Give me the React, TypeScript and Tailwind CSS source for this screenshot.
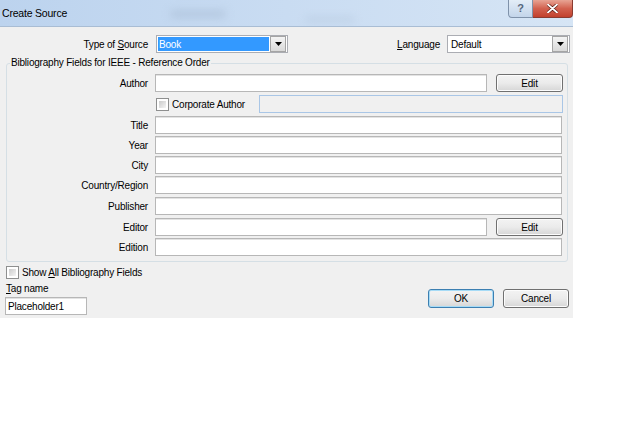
import React from 'react';

const FONT = "font-['Liberation_Sans',Arial,sans-serif]";

function DropArrow() {
  return (
    <div className="w-[16px] h-[16px] border border-[#a5a5a5] bg-gradient-to-b from-[#f4f4f4] to-[#d9d9d9] flex items-center justify-center">
      <svg width="7" height="4" viewBox="0 0 7 4">
        <path d="M0 0 H7 L3.5 4 Z" fill="#000" />
      </svg>
    </div>
  );
}

function TextBox({ className = '', children }: { className?: string; children?: React.ReactNode }) {
  return (
    <div
      className={`h-[18px] border border-[#b7b7b7] bg-white shadow-[inset_0_1px_0_#e3e3e3] flex items-center px-[2px] text-[10px] text-black ${className}`}
    >
      {children}
    </div>
  );
}

function Button({ label, primary = false, className = '' }: { label: string; primary?: boolean; className?: string }) {
  return (
    <div
      className={`flex items-center justify-center rounded-[3px] border text-[10px] text-black bg-gradient-to-b from-[#f3f3f3] via-[#ebebeb] to-[#d6d6d6] ${
        primary
          ? 'border-[#3c7fb1] shadow-[inset_0_0_0_1px_#a6dbf6]'
          : 'border-[#707070] shadow-[inset_0_0_0_1px_#fcfcfc]'
      } ${className}`}
    >
      {label}
    </div>
  );
}

function CheckBox() {
  return (
    <div className="w-[13px] h-[13px] border border-[#8e8f8f] bg-white p-[2px] shrink-0">
      <div className="w-full h-full bg-gradient-to-br from-[#cbcbcb] to-[#f5f5f5]" />
    </div>
  );
}

type FieldRow = { label: string; top: string; edit?: boolean };

const FIELDS: FieldRow[] = [
  { label: 'Title', top: 'mt-[3px]' },
  { label: 'Year', top: 'mt-[2px]' },
  { label: 'City', top: 'mt-[2px]' },
  { label: 'Country/Region', top: 'mt-[2px]' },
  { label: 'Publisher', top: 'mt-[3px]' },
  { label: 'Editor', top: 'mt-[3px]', edit: true },
  { label: 'Edition', top: 'mt-[2px]' },
];

export default function App() {
  return (
    <div className={`w-[626px] h-[439px] bg-white tracking-[-0.2px] ${FONT}`}>
      <div className="w-[573px] h-[318px] bg-[#f0f0f0] flex flex-col">
        {/* Title bar */}
        <div className="relative h-[27px] shrink-0 flex items-start bg-gradient-to-r from-[#bcd3ee] via-[#c9dcf2] to-[#d6e5f5] border-b border-[#a9bdd4] overflow-hidden">
          <div className="absolute left-[170px] top-[10px] w-[56px] h-[8px] rounded-full bg-[#a3b7cf] blur-[4px] opacity-50" />
          <div className="absolute left-[305px] top-[17px] w-[50px] h-[5px] rounded-full bg-[#a6b9d0] blur-[4px] opacity-40" />
          <div className="relative pl-[2px] pt-[7px] text-[10.5px] leading-[12px] text-black">Create Source</div>
          <div className="relative ml-auto flex">
            <div className="w-[25px] h-[18px] rounded-bl-[4px] border border-t-0 border-[#7f92aa] bg-gradient-to-b from-[#e3edf7] to-[#c3d5ea] flex items-center justify-center text-[11px] font-bold text-[#56677d]">
              ?
            </div>
            <div className="w-[40px] h-[18px] rounded-br-[4px] border border-t-0 border-l-0 border-[#8a3b31] bg-gradient-to-b from-[#e7a394] via-[#d2614f] to-[#c2402d] flex items-center justify-center">
              <svg width="11" height="9" viewBox="0 0 11 9">
                <path d="M1 0.5 L10 8.5 M10 0.5 L1 8.5" stroke="#5a1a12" strokeWidth="3.2" strokeLinecap="round" />
                <path d="M1 0.5 L10 8.5 M10 0.5 L1 8.5" stroke="#fff" strokeWidth="1.8" strokeLinecap="round" />
              </svg>
            </div>
          </div>
        </div>

        {/* Type of source / language */}
        <div className="mt-[8px] h-[18px] flex items-center text-[10px] text-black">
          <div className="w-[148px] text-right">
            Type of <span className="underline">S</span>ource
          </div>
          <div className="ml-[8px] w-[132px] h-[18px] border border-[#abadb3] bg-white flex items-center p-[1px]">
            <div className="flex-1 h-[14px] bg-[#3399ff] text-white flex items-center pl-[1px] mr-[1px]">Book</div>
            <DropArrow />
          </div>
          <div className="w-[152px] text-right">
            <span className="underline">L</span>anguage
          </div>
          <div className="ml-[7px] w-[123px] h-[18px] border border-[#abadb3] bg-white flex items-center p-[1px]">
            <div className="flex-1 pl-[2px]">Default</div>
            <DropArrow />
          </div>
        </div>

        {/* Group box */}
        <div className="mt-[10px] ml-[6px] w-[562px] h-[199px] shrink-0 border border-[#d5dfe5] rounded-[3px] flex flex-col text-[10px] text-black">
          <div className="-mt-[7px] ml-[3px] px-[1px] w-fit leading-[12px] bg-[#f0f0f0]">
            Bibliography Fields for IEEE - Reference Order
          </div>

          <div className="mt-[5px] flex items-center pr-[4px]">
            <div className="w-[141px] text-right">Author</div>
            <TextBox className="ml-[7px] w-[332px]" />
            <Button label="Edit" className="ml-auto w-[67px] h-[18px]" />
          </div>

          <div className="mt-[3px] h-[18px] flex items-center pr-[4px]">
            <div className="w-[141px]" />
            <div className="ml-[8px]">
              <CheckBox />
            </div>
            <div className="ml-[3px]">Corporate Author</div>
            <div className="ml-auto w-[304px] h-[18px] border border-[#a9c6e6] bg-[#f0f0f0]" />
          </div>

          {FIELDS.map((f) => (
            <div key={f.label} className={`${f.top} flex items-center pr-[4px]`}>
              <div className="w-[141px] text-right">{f.label}</div>
              {f.edit ? (
                <>
                  <TextBox className="ml-[7px] w-[332px]" />
                  <Button label="Edit" className="ml-auto w-[67px] h-[18px]" />
                </>
              ) : (
                <TextBox className="ml-[7px] w-[407px]" />
              )}
            </div>
          ))}
        </div>

        {/* Footer */}
        <div className="flex items-start text-[10px] text-black">
          <div className="pl-[5px] flex flex-col">
            <div className="mt-[4px] ml-[1px] h-[13px] flex items-center">
              <CheckBox />
              <div className="ml-[3px]">
                Show <span className="underline">A</span>ll Bibliography Fields
              </div>
            </div>
            <div className="mt-[4px] ml-[1px] leading-[12px]">
              <span className="underline">T</span>ag name
            </div>
            <TextBox className="mt-[2px] w-[82px]">Placeholder1</TextBox>
          </div>
          <div className="ml-auto mr-[4px] pt-[27px] flex gap-[9px]">
            <Button label="OK" primary className="w-[66px] h-[19px]" />
            <Button label="Cancel" className="w-[66px] h-[19px]" />
          </div>
        </div>
      </div>
    </div>
  );
}
